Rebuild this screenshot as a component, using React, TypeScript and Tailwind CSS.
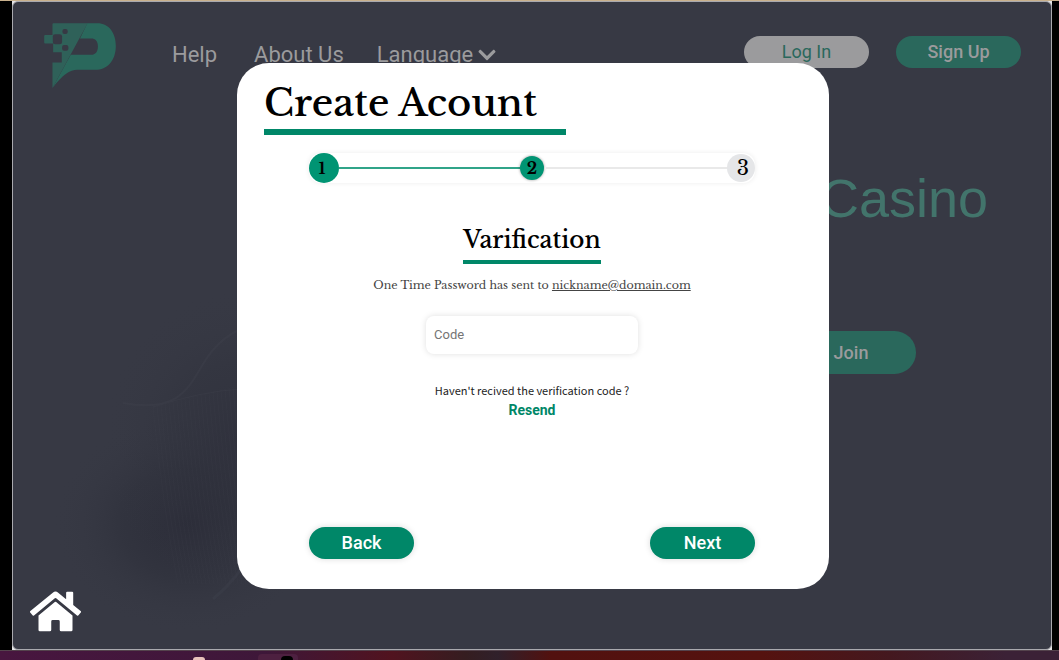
import { FaChevronDown, FaHome } from 'react-icons/fa';

const serif = "font-['Libre_Baskerville','Liberation_Serif',serif]";

function Logo() {
  return (
    <svg viewBox="42 39 216 196" className="h-[65px] w-[72px]" role="img" aria-label="Logo">
      <path
        fill="#2a685c"
        d="M172 40H202C238 40 258 70 258 108C258 152 232 180 196 180H142C120 180 96 196 67 235L122 135H184C196 135 204 126 204 110C204 94 196 86 184 86H150Z"
      />
      <path
        fill="#2f6159"
        d="M70 40H173L67 235V158H95V127H69V101H45Q42 101 42 98V78Q42 75 45 75H67V43Q67 40 70 40Z"
      />
      <g fill="#373944">
        <rect x="68" y="73" width="28" height="30" rx="7" />
        <rect x="97" y="57" width="16" height="15" rx="6" />
        <rect x="96" y="105" width="19" height="18" rx="6" />
      </g>
    </svg>
  );
}

function Waves() {
  const lines = Array.from({ length: 24 }, (_, i) => i);
  return (
    <svg
      viewBox="0 0 400 400"
      className="pointer-events-none absolute bottom-0 left-0 h-[400px] w-[400px]"
      aria-hidden="true"
    >
      <defs>
        <radialGradient id="shade" cx="0.5" cy="0.5" r="0.5">
          <stop offset="0" stopColor="#2b2c38" />
          <stop offset="0.5" stopColor="#2e303b" stopOpacity="0.6" />
          <stop offset="1" stopColor="#373944" stopOpacity="0" />
        </radialGradient>
      </defs>
      <ellipse cx="175" cy="275" rx="135" ry="110" fill="url(#shade)" />
      <ellipse cx="225" cy="190" rx="135" ry="150" fill="url(#shade)" opacity="0.6" />
      <g fill="none" stroke="#454752" opacity="0.25">
        <path d="M110 154C165 164 175 140 190 115Q205 90 228 80" strokeWidth="2" />
        <path d="M140 158Q190 142 228 140" />
        <path d="M200 350Q225 330 240 300" strokeWidth="3" />
      </g>
      <g fill="none" stroke="#454752" opacity="0.14">
        {lines.map((i) => (
          <path key={i} d={`M${140 + i * 4} ${158 - i}Q${150 + i * 4} 260 ${165 + i * 4} 335`} />
        ))}
      </g>
    </svg>
  );
}

function Stepper() {
  return (
    <ol
      className={`mx-[45px] mt-[18px] flex h-[30px] items-center rounded-xl text-base font-bold text-black shadow-[0_0_5px_rgba(0,0,0,0.08)] ${serif}`}
    >
      <li className="flex size-[30px] items-center justify-center rounded-full bg-[#009473] pr-1">1</li>
      <li aria-hidden="true" className="h-[2px] flex-1 bg-[#30a489]" />
      <li
        aria-current="step"
        className="mr-0.5 flex size-6 items-center justify-center rounded-full bg-[#009473] shadow-[0_0_3px_rgba(0,0,0,0.4)]"
      >
        2
      </li>
      <li aria-hidden="true" className="h-[2px] flex-1 bg-[#e9e9e9]" />
      <li className="flex size-7 items-center justify-center rounded-full bg-[#e5e6e8] pl-1 text-xl font-normal">
        3
      </li>
    </ol>
  );
}

const action =
  'h-8 w-[105px] rounded-full bg-[#008768] text-lg font-medium text-white shadow-[0_0_6px_rgba(0,0,0,0.15)]';

function AccountDialog() {
  return (
    <div className="absolute inset-0 flex items-center justify-center pl-0.5">
      <form
        role="dialog"
        aria-labelledby="dialog-title"
        onSubmit={(e) => e.preventDefault()}
        className="flex min-h-[526px] w-full max-w-[592px] flex-col rounded-[32px] bg-white pt-[14px] pr-[29px] pb-[30px] pl-[27px]"
      >
        <h1
          id="dialog-title"
          className={`w-[302px] border-b-[6px] border-[#008768] pt-px text-[37px] leading-[51px] font-medium whitespace-nowrap text-black ${serif}`}
        >
          Create Acount
        </h1>
        <Stepper />
        <div className="flex flex-col items-center">
          <h2
            className={`mt-[37px] border-b-4 border-[#008768] text-[23px] leading-[40px] font-medium text-black ${serif}`}
          >
            Varification
          </h2>
          <p className={`mt-3 text-[11px] leading-[18px] text-[#444] ${serif}`}>
            One Time Password has sent to <span className="underline">nickname@domain.com</span>
          </p>
          <input
            type="text"
            aria-label="Code"
            placeholder="Code"
            className="mt-[22px] h-[38px] w-[212px] rounded-lg bg-white px-2 text-[13px] shadow-[0_0_6px_rgba(0,0,0,0.13)] outline-none placeholder:text-[#757575]"
          />
          <p className="mt-[27px] font-['Noto_Sans_CJK_SC',sans-serif] text-[11px] leading-[18px] text-[#222]">
            Haven't recived the verification code ?
          </p>
          <button type="button" className="text-sm leading-[22px] font-bold text-[#008768]">
            Resend
          </button>
        </div>
        <div className="mx-[45px] mt-auto flex justify-between">
          <button type="button" className={action}>
            Back
          </button>
          <button type="submit" className={action}>
            Next
          </button>
        </div>
      </form>
    </div>
  );
}

export default function App() {
  return (
    <div className="flex min-h-screen flex-col bg-black font-['Roboto',sans-serif]">
      <div className="h-px bg-[#c9b18d]" />
      <div className="mr-[7px] ml-3 flex flex-1 bg-[#e4e4e6]">
        <div className="relative flex flex-1 flex-col overflow-hidden rounded-md border border-[#a9a9ae] bg-[#373944] text-[#9b9b9d]">
          <Waves />
          <header className="flex items-start pt-[21px] pr-[30px] pl-[31px]">
            <Logo />
            <nav className="mt-[18px] ml-14 flex items-center text-[22px] leading-7">
              <a href="#help">Help</a>
              <a href="#about" className="ml-[37px]">
                About Us
              </a>
              <button type="button" className="ml-[33px] flex items-center gap-1">
                Language <FaChevronDown className="size-5" />
              </button>
            </nav>
            <div className="mt-[13px] ml-auto flex gap-[27px]">
              <button type="button" className="h-8 w-[125px] rounded-full bg-[#9b9b9d] text-lg text-[#2a685c]">
                Log In
              </button>
              <button type="button" className="h-8 w-[125px] rounded-full bg-[#2a685c] text-lg font-medium">
                Sign Up
              </button>
            </div>
          </header>
          <main className="flex flex-1 flex-col items-end">
            <p className="mt-[78px] mr-[63px] font-['Liberation_Sans',sans-serif] text-[54px] leading-[64px] text-[#42746b]">
              Casino
            </p>
            <button
              type="button"
              className="mt-[101px] mr-[135px] h-[43px] w-[130px] rounded-full bg-[#2a685c] text-lg font-medium"
            >
              Join
            </button>
          </main>
          <AccountDialog />
          <a href="#home" aria-label="Home" className="absolute bottom-3 left-[17px] text-white">
            <FaHome className="size-[51px]" />
          </a>
        </div>
      </div>
      <footer className="flex h-[10px] items-end overflow-hidden border-t border-[#54434c] bg-[linear-gradient(90deg,#48163f_0%,#3e1739_25%,#51131f_37%,#351d20_44%,#30202b_47%,#52110f_52%,#55120f_72%,#44181f_84%,#3b2136_95%)]">
        <div className="ml-[193px] h-[3px] w-3 rounded-t-full bg-[#e8c2bb]" />
        <div className="ml-[53px] flex h-[6px] w-10 items-end justify-center rounded-t bg-[#4d2040]">
          <div className="ml-[18px] h-1 w-3 rounded-t-full bg-black" />
        </div>
      </footer>
    </div>
  );
}
